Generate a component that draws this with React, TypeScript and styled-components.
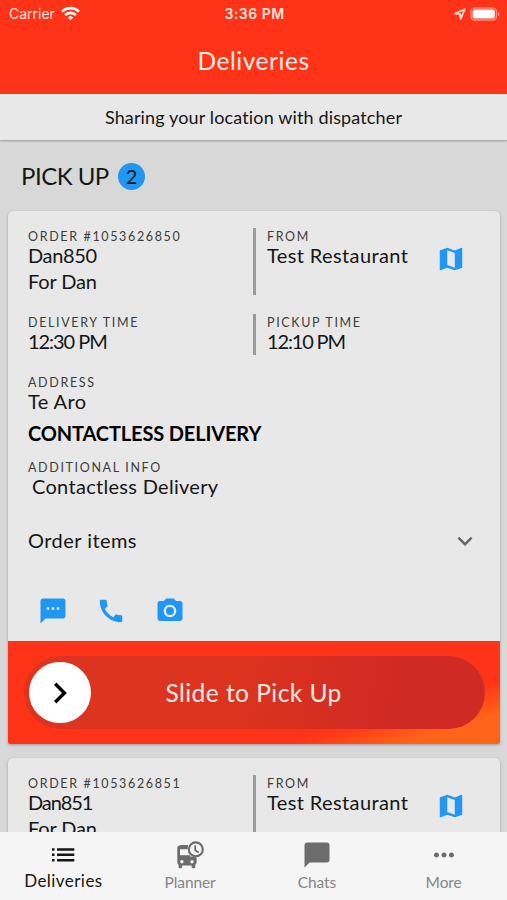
import React from "react";
import styled, { createGlobalStyle } from "styled-components";
import {
  MdCall,
  MdChatBubble,
  MdKeyboardArrowDown,
  MdMoreHoriz,
  MdPhotoCamera,
  MdSms,
} from "react-icons/md";

const GlobalStyle = createGlobalStyle`
  * { box-sizing: border-box; }
  html, body { margin: 0; padding: 0; background: #d8d8d8; }
  body { font-family: Lato, sans-serif; color: #161616; }
  button { font: inherit; color: inherit; border: 0; padding: 0; background: none; }
`;

const Screen = styled.div`
  width: 507px;
  height: 900px;
  display: flex;
  flex-direction: column;
  overflow: hidden;
  background: #d8d8d8;
`;

const Header = styled.header`
  flex: none;
  height: 94px;
  background: #ff3317;
  color: #ffeeea;
`;

const StatusBar = styled.div`
  height: 27px;
  padding: 0 7px 0 9px;
  display: grid;
  grid-template-columns: 1fr auto 1fr;
  align-items: center;
  font-family: Inter, sans-serif;
  font-size: 14px;
  color: #ffe3dd;
`;

const StatusGroup = styled.div<{ $end?: boolean }>`
  display: flex;
  align-items: center;
  justify-content: ${(p) => (p.$end ? "flex-end" : "flex-start")};
  gap: ${(p) => (p.$end ? 4 : 6.5)}px;
`;

const Clock = styled.span`
  font-weight: 600;
  letter-spacing: 0.5px;
`;

const Title = styled.h1`
  margin: 0;
  height: 66px;
  line-height: 67px;
  text-align: center;
  font-size: 24.5px;
  font-weight: 400;
  letter-spacing: 0.55px;
`;

const Banner = styled.div`
  flex: none;
  height: 46px;
  background: #e8e8e8;
  box-shadow: 0 1px 2px rgba(0, 0, 0, 0.3);
  text-align: center;
  font-size: 18px;
  line-height: 46px;
  letter-spacing: 0.14px;
`;

const Content = styled.main`
  flex: 1;
  min-height: 0;
  overflow: hidden;
  padding: 0 7.5px 0 8px;
`;

const SectionHeading = styled.h2`
  margin: 0;
  height: 71px;
  padding: 1px 0 0 13px;
  display: flex;
  align-items: center;
  gap: 9px;
  font-size: 24px;
  font-weight: 400;
  letter-spacing: -0.5px;
  line-height: 34px;
`;

const Count = styled.span`
  width: 27px;
  height: 27px;
  border-radius: 50%;
  background: #2196f3;
  text-align: center;
  font-size: 20px;
  line-height: 27px;
`;

const Card = styled.article`
  margin-bottom: 14.5px;
  border-radius: 5px 5px 2px 2px;
  overflow: hidden;
  background: #e8e8e8;
  box-shadow: 0 1px 3px rgba(0, 0, 0, 0.28);
`;

const CardBody = styled.div<{ $height: number }>`
  height: ${(p) => p.$height}px;
  padding: 17px 20px 0;
`;

const Row = styled.div<{ $height: number }>`
  display: grid;
  grid-template-columns: 225px 1fr;
  height: ${(p) => p.$height}px;
  margin-bottom: 19px;
`;

const Field = styled.div<{ $divided?: boolean }>`
  display: flex;
  flex-direction: column;
  ${(p) => p.$divided && "border-left: 3px solid #9b9b9b; padding-left: 11px;"}
`;

const FieldWithAction = styled.div`
  display: flex;
  justify-content: space-between;
  padding-right: 14px;
  border-left: 3px solid #9b9b9b;
`;

const FromField = styled(Field)`
  padding-left: 11px;
`;

const Label = styled.span`
  padding-top: 1px;
  font-size: 12.5px;
  line-height: 15px;
  letter-spacing: 1.65px;
  color: #3c3c3c;
`;

const Value = styled.span<{ $tracking?: number; $indent?: number }>`
  margin-top: -0.6px;
  margin-bottom: 0.6px;
  font-size: 20px;
  line-height: 25.4px;
  letter-spacing: ${(p) => p.$tracking ?? 0.38}px;
  padding-left: ${(p) => p.$indent ?? 0}px;
  white-space: nowrap;
`;

const Notice = styled.strong`
  display: block;
  margin: 5px 0 13px;
  font-size: 20px;
  line-height: 26px;
  letter-spacing: -0.14px;
  color: #000;
`;

const Disclosure = styled.button`
  width: 100%;
  margin-top: 28px;
  height: 26px;
  display: flex;
  align-items: center;
  justify-content: space-between;
`;

const Actions = styled.div`
  display: flex;
  gap: 28.5px;
  margin: 42px 0 0 9.5px;
  color: #2196f3;
`;

const MapButton = styled.button`
  height: 30px;
  margin-top: 15.5px;
  color: #2196f3;
`;

const IconButton = styled.button`
  width: 30px;
  height: 30px;
`;

const Footer = styled.div`
  height: 102.5px;
  padding: 15px 14.5px 14.5px 16px;
  background: linear-gradient(163deg, #ff3317 74%, #ff6418 88%);
`;

const Slider = styled.div`
  height: 73px;
  padding: 0 5px;
  border-radius: 36.5px;
  display: flex;
  align-items: center;
  background: linear-gradient(100deg, #dc341e 45%, #d02a24 80%);
`;

const Knob = styled.button`
  flex: none;
  width: 61.5px;
  height: 61.5px;
  border-radius: 50%;
  display: grid;
  place-items: center;
  background: #fff;
`;

const SliderText = styled.span`
  margin: 1px 0 0 75px;
  font-size: 24.5px;
  line-height: 30px;
  letter-spacing: 0.46px;
  color: #ffe9e5;
`;

const TabBar = styled.nav`
  flex: none;
  height: 68px;
  display: grid;
  grid-template-columns: repeat(4, 1fr);
  background: #f5f5f5;
`;

const Tab = styled.button<{ $active?: boolean }>`
  display: flex;
  flex-direction: column;
  align-items: center;
  padding-top: 8px;
  color: ${(p) => (p.$active ? "#161616" : "#6c6c6c")};
`;

const TabLabel = styled.span<{ $active?: boolean }>`
  margin-top: ${(p) => (p.$active ? 1 : 2)}px;
  font-size: ${(p) => (p.$active ? 17 : 15.5)}px;
  letter-spacing: ${(p) => (p.$active ? 0.45 : -0.1)}px;
  line-height: 20px;
  color: ${(p) => (p.$active ? "#161616" : "#858585")};
`;

const WifiIcon = () => (
  <svg width="19" height="15" viewBox="0 0 19 15" fill="none" stroke="#fff" strokeWidth="2.7">
    <path d="M1 5.600a12.200 12.200 0 0 1 17 0" />
    <path d="M4.100 9a7.800 7.800 0 0 1 10.800 0" />
    <path d="M9.500 14.300 6.700 11.500a4 4 0 0 1 5.600 0z" fill="#fff" stroke="none" />
  </svg>
);

const LocationIcon = () => (
  <svg width="12" height="12" viewBox="0 0 12 12" fill="none" stroke="#ffe3dd" strokeWidth="1.7" strokeLinejoin="round">
    <path d="M10.800 1.200 1.200 5.600l4.900.500.500 4.700z" />
  </svg>
);

const BatteryIcon = () => (
  <svg width="30" height="14" viewBox="0 0 30 14">
    <rect x="0.900" y="0.900" width="25.600" height="12.200" rx="3.800" fill="none" stroke="#ff8a76" strokeWidth="1.500" />
    <rect x="2.600" y="2.600" width="22.200" height="8.800" rx="2" fill="#fff" />
    <path d="M28 5v4c1-.4 1.500-1.100 1.500-2S29 5.400 28 5z" fill="#ff8a76" />
  </svg>
);

const ChevronRight = () => (
  <svg width="16" height="24" viewBox="0 0 16 24" fill="none" stroke="#000" strokeWidth="3.400">
    <path d="M3.200 2.800 12.400 12 3.200 21.200" />
  </svg>
);

const MapIcon = () => (
  <svg width="30" height="30" viewBox="0 0 24 24" fill="currentColor">
    <path d="M20.500 3l-.16.030L15 5.100 9 3 3.360 4.900c-.21.070-.36.250-.36.480V20.500c0 .28.220.5.5.5l.16-.030L9 18.900l6 2.100 5.640-1.900c.21-.070.36-.250.36-.480V3.500c0-.280-.220-.5-.5-.5zM15 19l-6-2.110V5l6 2.110V19z" />
  </svg>
);

const ListIcon = () => (
  <svg width="24" height="30" viewBox="0 0 24 30" fill="currentColor">
    <path d="M1 8.300h2.500v2.500H1zM1 13.600h2.500v2.500H1zM1 19h2.500v2.500H1zM6 8.300h17.300v2.500H6zM6 13.600h17.300v2.500H6zM6 19h17.300v2.500H6z" />
  </svg>
);

const BusClockIcon = () => (
  <svg width="30" height="30" viewBox="0 0 30 30">
    <path
      fill="currentColor"
      fillRule="evenodd"
      d="M6 5C3.500 5.300 2.300 6.400 2.300 8.500V22c0 1.200.5 2 1.300 2.700V27c0 .7.400 1.200 1.200 1.200H6c.8 0 1.200-.5 1.200-1.200v-1.600h9.500V27c0 .7.400 1.200 1.200 1.200h1.200c.8 0 1.200-.5 1.200-1.200v-2.300c.8-.7 1.300-1.500 1.300-2.700v-4.400L12.500 16H5V9.300h7.600L13 5zM6.900 20a1.700 1.700 0 1 1 0 3.400 1.700 1.700 0 0 1 0-3.400zm10.100 0a1.700 1.700 0 1 1 0 3.400 1.700 1.700 0 0 1 0-3.400z"
    />
    <path fill="currentColor" d="M5 15.200h10v2.500H5z" />
    <circle cx="20.800" cy="9.400" r="7" fill="#f5f5f5" stroke="currentColor" strokeWidth="2.100" />
    <path d="M20.200 5.200v5l3.500 2.300" fill="none" stroke="currentColor" strokeWidth="1.700" />
  </svg>
);

type OrderProps = { id: string; name: string; tracking: number; details?: boolean };

const OrderCard = ({ id, name, tracking, details }: OrderProps) => (
  <Card>
    <CardBody $height={details ? 430 : 103}>
      <Row $height={66.5}>
        <Field>
          <Label>ORDER #{id}</Label>
          <Value $tracking={tracking}>{name}</Value>
          <Value $tracking={-0.15}>For Dan</Value>
        </Field>
        <FieldWithAction>
          <FromField>
            <Label>FROM</Label>
            <Value>Test Restaurant</Value>
          </FromField>
          <MapButton aria-label="Open map">
            <MapIcon />
          </MapButton>
        </FieldWithAction>
      </Row>
      {details && (
        <>
          <Row $height={41}>
            <Field>
              <Label>DELIVERY TIME</Label>
              <Value $tracking={-1.05}>12:30 PM</Value>
            </Field>
            <Field $divided>
              <Label>PICKUP TIME</Label>
              <Value $tracking={-1.15}>12:10 PM</Value>
            </Field>
          </Row>
          <Field>
            <Label>ADDRESS</Label>
            <Value>Te Aro</Value>
          </Field>
          <Notice>CONTACTLESS DELIVERY</Notice>
          <Field>
            <Label>ADDITIONAL INFO</Label>
            <Value $tracking={0.3} $indent={4}>Contactless Delivery</Value>
          </Field>
          <Disclosure>
            <Value $tracking={0.45}>Order items</Value>
            <MdKeyboardArrowDown size={30} color="#686868" />
          </Disclosure>
          <Actions>
            <IconButton aria-label="Message"><MdSms size={30} /></IconButton>
            <IconButton aria-label="Call"><MdCall size={30} /></IconButton>
            <IconButton aria-label="Take photo"><MdPhotoCamera size={30} /></IconButton>
          </Actions>
        </>
      )}
    </CardBody>
    {details && (
      <Footer>
        <Slider>
          <Knob aria-label="Slide"><ChevronRight /></Knob>
          <SliderText>Slide to Pick Up</SliderText>
        </Slider>
      </Footer>
    )}
  </Card>
);

export default function App() {
  return (
    <>
      <GlobalStyle />
      <Screen>
        <Header>
          <StatusBar>
            <StatusGroup>
              <span>Carrier</span>
              <WifiIcon />
            </StatusGroup>
            <Clock>3:36 PM</Clock>
            <StatusGroup $end>
              <LocationIcon />
              <BatteryIcon />
            </StatusGroup>
          </StatusBar>
          <Title>Deliveries</Title>
        </Header>
        <Banner>Sharing your location with dispatcher</Banner>
        <Content>
          <SectionHeading>
            PICK UP <Count>2</Count>
          </SectionHeading>
          <OrderCard id="1053626850" name="Dan850" tracking={-0.37} details />
          <OrderCard id="1053626851" name="Dan851" tracking={-1.1} />
        </Content>
        <TabBar>
          <Tab $active>
            <ListIcon />
            <TabLabel $active>Deliveries</TabLabel>
          </Tab>
          <Tab>
            <BusClockIcon />
            <TabLabel>Planner</TabLabel>
          </Tab>
          <Tab>
            <MdChatBubble size={30} />
            <TabLabel>Chats</TabLabel>
          </Tab>
          <Tab>
            <MdMoreHoriz size={30} />
            <TabLabel>More</TabLabel>
          </Tab>
        </TabBar>
      </Screen>
    </>
  );
}
